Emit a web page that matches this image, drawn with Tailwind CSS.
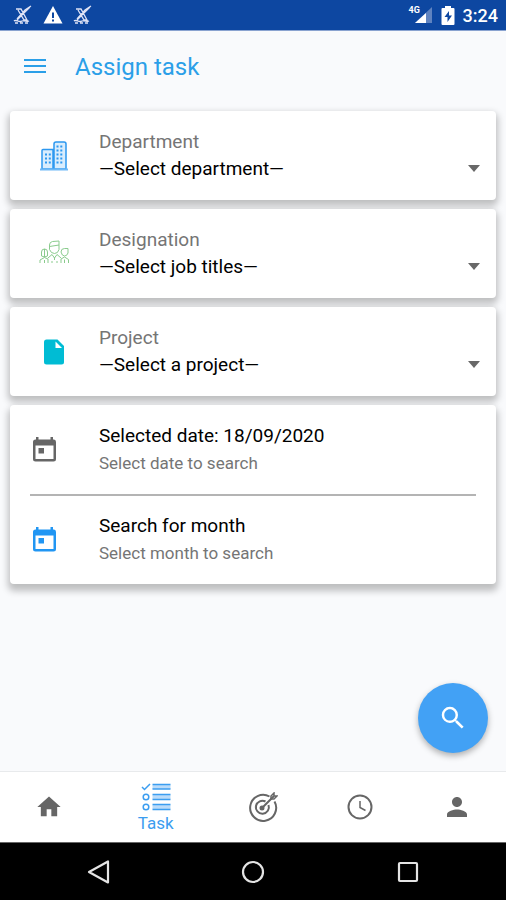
<!DOCTYPE html>
<html lang="en">
<head>
<meta charset="utf-8">
<meta name="viewport" content="width=device-width, initial-scale=1">
<title>Assign task</title>
<script src="https://cdn.jsdelivr.net/npm/@tailwindcss/browser@4"></script>
</head>
<body class="flex min-h-screen flex-col bg-[#f9fafc] font-['Roboto',sans-serif] text-black">

<!-- Status bar -->
<div class="flex h-[31px] items-center justify-between border-b border-[#8aa3d0] bg-[#0d47a1] pr-2 pl-3 text-white">
  <div class="flex items-center gap-2">
    <svg class="size-[22px]" viewBox="0 0 22 22" fill="none" stroke="#dfe3f5" stroke-width="1.300"><path d="M4 5h5l6 11h-3L6 6M18 3 5 16M19 2l-6 4-8 9M2 17c2-2 5 2 8 0 3-1 5 1 7 0M3 19h3M8 19h3M13 19h3"/></svg>
    <svg class="size-[22px]" viewBox="0 0 22 22"><path fill="#fff" d="M11 2 1.500 19.500h19z"/><path fill="#0d47a1" d="M10 8.500h2v5.500h-2zM10 15.500h2v2h-2z"/></svg>
    <svg class="size-[22px]" viewBox="0 0 22 22" fill="none" stroke="#dfe3f5" stroke-width="1.300"><path d="M4 5h5l6 11h-3L6 6M18 3 5 16M19 2l-6 4-8 9M2 17c2-2 5 2 8 0 3-1 5 1 7 0M3 19h3M8 19h3M13 19h3"/></svg>
  </div>
  <div class="flex items-center gap-2">
    <div class="relative h-[18px] w-6">
      <svg class="h-[18px] w-6" viewBox="0 0 24 18"><path fill="#5f83c0" d="M23 1v16H6z"/><path fill="#fff" d="M17 7v10H6z"/></svg>
      <span class="absolute top-0 left-0 bg-[#0d47a1] text-[9px] leading-[9px] font-bold">4G</span>
    </div>
    <svg class="h-[19px] w-3.5" viewBox="0 0 14 19"><path fill="#fff" d="M4 0h6v2h2.500q1 0 1 1v15q0 1-1 1h-11q-1 0-1-1V3q0-1 1-1H4z"/><path fill="#0d47a1" d="M8 5 3.500 11H6.500v5L11 9.500H8z"/></svg>
    <span class="pt-0.5 text-[18px] leading-6 font-medium">3:24</span>
  </div>
</div>

<!-- App bar -->
<header class="flex h-[71px] items-center gap-7 px-[23px] text-[#2b9fe8]">
  <button type="button" aria-label="Open menu"><svg class="size-6" viewBox="0 0 24 24" fill="none" stroke="currentColor" stroke-width="2"><path d="M1 5h22M1 11h22M1 17h22"/></svg></button>
  <h1 class="text-[24px] leading-8">Assign task</h1>
</header>

<!-- Filters -->
<main class="flex grow flex-col gap-[9px] px-2.5 pt-[9px]">
  <div class="flex items-center rounded-sm bg-white py-[18px] pr-4 pl-[29px] shadow-[0_4px_7px_2px_rgba(0,0,0,0.24)]">
    <svg class="mr-[30px] size-[30px] shrink-0" viewBox="0 0 30 30" fill="none" stroke="#2d98f0" stroke-width="1.500"><path fill="#d9edfd" d="M3 28V9.500q0-1 1-1h10V28zM15 28V3q0-2 2-2h8q2 0 2 2v25z"/><path stroke="#6fb9f6" stroke-width="2" d="M1 28.500h28"/><path stroke-width="2.200" stroke-dasharray="2 1.800" d="M6 13.500h7M6 17.500h7M6 21.500h7M17.500 5.500h7M17.500 9.500h7M17.500 13.500h7M17.500 17.500h7M17.500 21.500h7"/></svg>
    <div class="relative min-w-0 grow">
      <label for="department" class="block text-[19px] leading-[26px] text-[#757575]">Department</label>
      <select id="department" class="block h-[27px] w-full appearance-none bg-transparent text-[19px] leading-[26px]"><option>—Select department—</option></select>
      <svg class="pointer-events-none absolute right-0 bottom-2.5 h-[7px] w-3" viewBox="0 0 12 7"><path fill="#686868" d="M0 0h12L6 7z"/></svg>
    </div>
  </div>

  <div class="flex items-center rounded-sm bg-white py-[18px] pr-4 pl-[29px] shadow-[0_4px_7px_2px_rgba(0,0,0,0.24)]">
    <svg class="mr-[30px] size-[30px] shrink-0" viewBox="0 0 30 30" fill="none" stroke="#8acb8d" stroke-width="1"><path d="M10.500 10.500V6q0-3 3-3.500L20 2v8.500q-1 4-4.500 4t-5-4zM10.500 7.500 20 6M2.500 17v-4q0-3 3-3t3 3v4q-3 2-6 0zM5.500 10v8M22 13q0-3.500 3.500-3.500H29V14q-1 3-3.500 3T22 13zM1 24v-3l4.500-2.500L9 20v4M9 19l4-3.500 2.500 3.500 2.500-3.500 4 3.500M22 24v-4l3.500-2 4 2.500V24M15.500 18.500V21M13 22v2M18 22v2M5.500 21v3M25.500 20.500V24"/></svg>
    <div class="relative min-w-0 grow">
      <label for="designation" class="block text-[19px] leading-[26px] text-[#757575]">Designation</label>
      <select id="designation" class="block h-[27px] w-full appearance-none bg-transparent text-[19px] leading-[26px]"><option>—Select job titles—</option></select>
      <svg class="pointer-events-none absolute right-0 bottom-2.5 h-[7px] w-3" viewBox="0 0 12 7"><path fill="#686868" d="M0 0h12L6 7z"/></svg>
    </div>
  </div>

  <div class="flex items-center rounded-sm bg-white py-[18px] pr-4 pl-[29px] shadow-[0_4px_7px_2px_rgba(0,0,0,0.24)]">
    <svg class="mr-[30px] size-[30px] shrink-0" viewBox="0 0 30 30"><path fill="#00bcd4" d="M7.500 2.500H18.500L25 9V25q0 2.500-2.500 2.500h-15Q5 27.500 5 25V5q0-2.500 2.500-2.500z"/><path fill="#fff" d="M16.500 4.500V11H23z"/></svg>
    <div class="relative min-w-0 grow">
      <label for="project" class="block text-[19px] leading-[26px] text-[#757575]">Project</label>
      <select id="project" class="block h-[27px] w-full appearance-none bg-transparent text-[19px] leading-[26px]"><option>—Select a project—</option></select>
      <svg class="pointer-events-none absolute right-0 bottom-2.5 h-[7px] w-3" viewBox="0 0 12 7"><path fill="#686868" d="M0 0h12L6 7z"/></svg>
    </div>
  </div>

  <div class="rounded-sm bg-white px-5 shadow-[0_5px_7px_2px_rgba(0,0,0,0.24)]">
    <button type="button" class="flex h-[89px] w-full items-center gap-[41px] text-left">
      <svg class="size-7 shrink-0 text-[#666]" viewBox="0 0 28 28"><path fill="currentColor" fill-rule="evenodd" d="M6 1h2.500v2.500h12V1H23v2.500h1Q26 3.500 26 6v17q0 2.500-2.500 2.500h-18Q3 25.500 3 23V6q0-2.500 2.500-2.500H6zM5.500 9.500V23h18V9.500z"/><path fill="currentColor" d="M8.500 12h5.500v5.500H8.500z"/></svg>
      <span class="block"><span class="block text-[19px] leading-[26px]">Selected date: 18/09/2020</span><span class="block text-[17px] leading-7 text-[#757575]">Select date to search</span></span>
    </button>
    <button type="button" class="flex h-[90px] w-full items-center gap-[41px] border-t-2 border-[#b4b4b4] text-left">
      <svg class="size-7 shrink-0 text-[#2196f3]" viewBox="0 0 28 28"><path fill="currentColor" fill-rule="evenodd" d="M6 1h2.500v2.500h12V1H23v2.500h1Q26 3.500 26 6v17q0 2.500-2.500 2.500h-18Q3 25.500 3 23V6q0-2.500 2.500-2.500H6zM5.500 9.500V23h18V9.500z"/><path fill="currentColor" d="M8.500 12h5.500v5.500H8.500z"/></svg>
      <span class="block"><span class="block text-[19px] leading-[26px]">Search for month</span><span class="block text-[17px] leading-7 text-[#757575]">Select month to search</span></span>
    </button>
  </div>

  <button type="button" aria-label="Search" class="mt-auto mr-2 mb-[18px] grid size-[70px] place-items-center self-end rounded-full bg-[#42a1f5] text-white shadow-[0_3px_6px_rgba(0,0,0,0.3)]">
    <svg class="size-[30px]" viewBox="0 0 24 24"><path fill="currentColor" d="M15.500 14h-.79l-.28-.27A6.471 6.471 0 0 0 16 9.500 6.500 6.500 0 1 0 9.500 16c1.610 0 3.090-.59 4.230-1.570l.27.28v.79l5 4.990L20.490 19l-4.990-5zm-6 0C7.010 14 5 11.990 5 9.500S7.010 5 9.500 5 14 7.010 14 9.500 11.990 14 9.500 14z"/></svg>
  </button>
</main>

<!-- Bottom navigation -->
<nav class="flex h-[71px] items-center border-t border-[#e8eaec] bg-white text-[#666]">
  <a href="#home" aria-label="Home" class="flex flex-[5] justify-center"><svg class="size-7" viewBox="0 0 24 24"><path fill="currentColor" d="M10 20v-6h4v6h5v-8h3L12 3 2 12h3v8z"/></svg></a>
  <a href="#task" aria-current="page" class="flex flex-[6] flex-col items-center pt-1 text-[#3b9df0]">
    <svg class="h-7 w-[30px]" viewBox="0 0 30 28" fill="none" stroke="currentColor"><path stroke-width="1.500" d="M1 4 3.500 6.500 9 1"/><circle cx="5" cy="14" r="2.800" stroke-width="1.500"/><circle cx="5" cy="24" r="2.800" stroke-width="1.500"/><path stroke="#b9dbfa" stroke-width="4" d="M11.500 4h18M11.500 14h18M11.500 24h18"/><path stroke-width="1.300" d="M11.500 1.500h18M11.500 6h18M11.500 11.500h18M11.500 16.500h18M11.500 21.500h18M11.500 26.500h18"/></svg>
    <span class="text-[17px] leading-6">Task</span>
  </a>
  <a href="#goals" aria-label="Goals" class="flex flex-[5] justify-center"><svg class="size-[30px]" viewBox="0 0 30 30" fill="none" stroke="currentColor" stroke-width="2"><path d="M21.500 4.500A13 13 0 1 0 26.500 9.500"/><path d="M17.500 9.500A6.500 6.500 0 1 0 20.500 13M14 16 26 4"/><path stroke-width="1.500" d="M23 7V4l3-3v3h3l-3 3z"/><circle cx="14" cy="16" r="1.500" fill="currentColor"/></svg></a>
  <a href="#history" aria-label="History" class="flex flex-[5] justify-center"><svg class="size-7" viewBox="0 0 28 28" fill="none" stroke="currentColor"><circle cx="14" cy="14" r="11.500" stroke-width="2"/><path stroke-width="1.500" d="M14 8v6.500l5.500 3"/></svg></a>
  <a href="#profile" aria-label="Profile" class="flex flex-[5] justify-center"><svg class="size-[30px]" viewBox="0 0 24 24"><path fill="currentColor" d="M12 12c2.210 0 4-1.790 4-4s-1.790-4-4-4-4 1.790-4 4 1.790 4 4 4zm0 2c-2.670 0-8 1.340-8 4v2h16v-2c0-2.660-5.330-4-8-4z"/></svg></a>
</nav>

<!-- System navigation -->
<div class="flex h-[58px] items-center border-t border-[#666] bg-black px-5 text-[#e4e4e4]">
  <button type="button" aria-label="Back" class="flex flex-1 justify-center"><svg class="size-6" viewBox="0 0 24 24" fill="none" stroke="currentColor" stroke-width="2.200" stroke-linejoin="round"><path d="M22 1.500v21L3 12z"/></svg></button>
  <button type="button" aria-label="Home screen" class="flex flex-1 justify-center"><svg class="size-6" viewBox="0 0 24 24" fill="none" stroke="currentColor" stroke-width="2.200"><circle cx="12" cy="12" r="10"/></svg></button>
  <button type="button" aria-label="Recent apps" class="flex flex-1 justify-center"><svg class="size-6" viewBox="0 0 24 24" fill="none" stroke="currentColor" stroke-width="2.200"><rect x="3" y="3" width="18" height="18" rx="1"/></svg></button>
</div>
</body>
</html>
